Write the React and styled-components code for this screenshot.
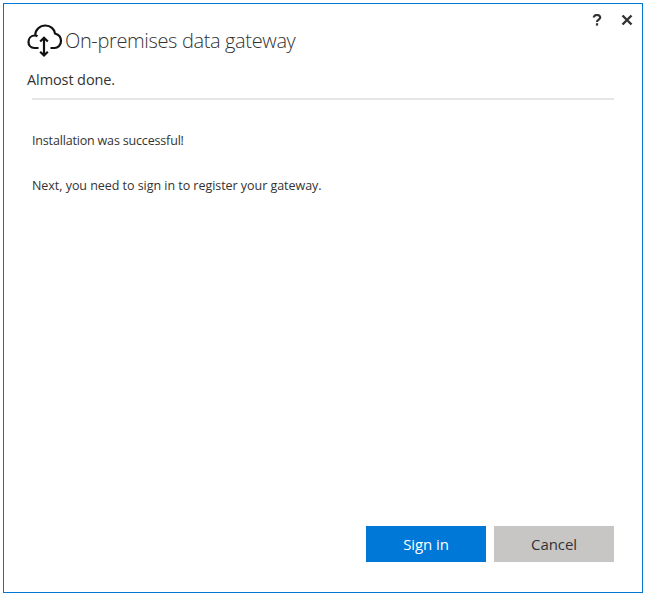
import styled, { createGlobalStyle } from "styled-components";

const GlobalStyle = createGlobalStyle`
  html, body {
    margin: 0;
    padding: 0;
    background: #fff;
  }
`;

const Page = styled.div`
  width: 647px;
  height: 598px;
  padding: 3px 4px 5px 3px;
  box-sizing: border-box;
  font-family: "Open Sans", "Noto Sans", sans-serif;
`;

const Window = styled.div`
  height: 100%;
  box-sizing: border-box;
  border: 1px solid #0078d7;
  display: flex;
  flex-direction: column;
  padding: 0 28px 30px 23px;
`;

const TopBar = styled.div`
  display: flex;
  justify-content: flex-end;
  gap: 18px;
  height: 18px;
  margin-right: -19px;
  padding-top: 10px;
`;

const TopButton = styled.svg`
  width: 12px;
  height: 12px;
  display: block;
`;

const Header = styled.div`
  display: flex;
  align-items: center;
  height: 36px;
  margin-top: -9px;
  gap: 2px;
`;

const Title = styled.h1`
  margin: 0 0 2px;
  font-size: 20px;
  font-weight: 300;
  color: #333;
  letter-spacing: -0.36px;
`;

const Subtitle = styled.div`
  margin-top: 11px;
  font-size: 14.5px;
  line-height: 20px;
  color: #333;
  letter-spacing: -0.1px;
`;

const Divider = styled.hr`
  margin: 8px 0 0 5px;
  border: none;
  height: 2px;
  background: #e6e6e6;
`;

const Body = styled.div`
  flex: 1;
  padding: 32px 0 0 5px;
`;

const Message = styled.p`
  margin: 0 0 27px;
  font-size: 12.5px;
  line-height: 18px;
  color: #333;
  letter-spacing: ${(p) => p.$tracking}px;
`;

const Footer = styled.div`
  display: flex;
  justify-content: flex-end;
  gap: 8px;
`;

const Button = styled.button`
  width: 120px;
  height: 36px;
  border: none;
  padding: 0;
  font-family: inherit;
  font-size: 15px;
  letter-spacing: -0.1px;
  background: ${(p) => (p.$primary ? "#0078d7" : "#c8c6c4")};
  color: ${(p) => (p.$primary ? "#fff" : "#333")};
  cursor: pointer;
`;

const CloudIcon = () => (
  <svg width="36" height="36" viewBox="0 0 36 36" fill="none" stroke="#111" strokeWidth="2.2">
    <path d="M11.5 25 H7.5 C3.5 25 1.5 22 1.5 19 C1.5 15.5 4 12.5 8 12.5 C9 12.5 9.8 12.8 10.5 13.2 M8.2 12.5 C8.2 6.5 13 2.5 18.5 2.5 C23.5 2.5 27.5 6 28 10.5 C31.5 11.5 34 14.5 34 18 C34 22 31 25 27.5 25 H23.5" />
    <path d="M17 15 V32" />
    <path d="M13.2 18.5 L17 14.7 L20.8 18.5" />
    <path d="M13.2 28.7 L17 32.5 L20.8 28.7" />
  </svg>
);

const App = () => {
  return (
    <Page>
      <GlobalStyle />
      <Window>
        <TopBar>
          <TopButton viewBox="0 0 12 12" fill="none" stroke="#333" strokeWidth="2.2">
            <path d="M2.8 3.6 C2.8 1.6 4.3 1 6 1 C7.8 1 9.2 2 9.2 3.6 C9.2 5.6 6 5.6 6 8" />
            <path d="M6 9.2 V11.6" />
          </TopButton>
          <TopButton viewBox="0 0 12 12" fill="none" stroke="#333" strokeWidth="2.4">
            <path d="M1.5 1.5 L10.5 10.5 M10.5 1.5 L1.5 10.5" />
          </TopButton>
        </TopBar>
        <Header>
          <CloudIcon />
          <Title>On-premises data gateway</Title>
        </Header>
        <Subtitle>Almost done.</Subtitle>
        <Divider />
        <Body>
          <Message $tracking={-0.17}>Installation was successful!</Message>
          <Message $tracking={-0.04}>Next, you need to sign in to register your gateway.</Message>
        </Body>
        <Footer>
          <Button $primary>Sign in</Button>
          <Button>Cancel</Button>
        </Footer>
      </Window>
    </Page>
  );
};

export default App;
